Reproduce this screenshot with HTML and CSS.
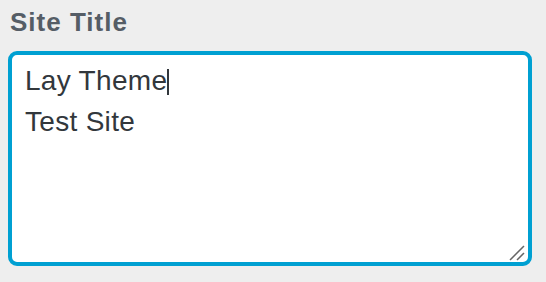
FILE: index.html
```html
<!DOCTYPE html>
<html lang="en">
<head>
    <meta charset="UTF-8">
    <title>Site Title</title>
    <link rel="stylesheet" href="styles.css">
</head>
<body>
    <div class="field">
        <label class="field-label">Site Title</label>
        <div class="textbox">
            <div class="textbox-text">Lay Theme<span class="caret"></span><br>Test Site</div>
            <svg class="grip" width="16" height="16" viewBox="0 0 16 16">
                <line x1="1" y1="15" x2="15" y2="1" stroke="#666" stroke-width="1.5"/>
                <line x1="8" y1="15" x2="15" y2="8" stroke="#666" stroke-width="1.5"/>
            </svg>
        </div>
    </div>
</body>
</html>
```

FILE: styles.css
```css
body {
    margin: 0;
    padding: 0;
    background-color: #eeeeee;
    font-family: "Liberation Sans", Arial, sans-serif;
}
.field {
    padding: 6px 14px 0 8px;
}
.field-label {
    display: block;
    font-size: 26px;
    font-weight: bold;
    letter-spacing: 1px;
    color: #555d66;
    padding-left: 2px;
    line-height: 32px;
    margin-bottom: 13px;
}
.textbox {
    position: relative;
    height: 207px;
    background: white;
    border: 4px solid #00a0d2;
    border-radius: 9px;
}
.textbox-text {
    padding: 5px 0 0 13px;
    font-size: 28px;
    letter-spacing: 0.3px;
    line-height: 41px;
    color: #32373c;
}
.caret {
    display: inline-block;
    width: 2px;
    height: 26px;
    background: #32373c;
    vertical-align: -5px;
    margin-left: 0;
}
.grip {
    position: absolute;
    right: 3px;
    bottom: 1px;
}
```
